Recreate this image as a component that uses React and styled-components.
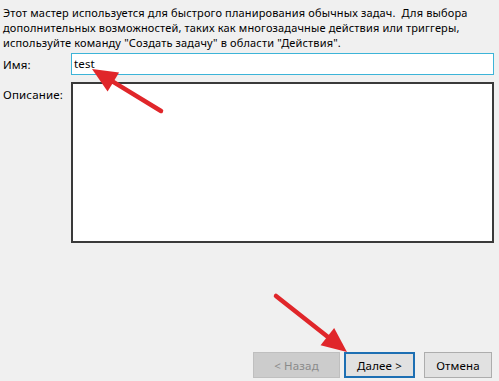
import styled, { createGlobalStyle } from "styled-components";

const Global = createGlobalStyle`
  html, body {
    margin: 0;
    padding: 0;
    background: #f0f0f0;
  }
  body {
    font-family: "Noto Sans", "Open Sans", sans-serif;
    font-size: 11px;
    letter-spacing: 0.15px;
    color: #000;
  }
`;

const Page = styled("div")`
  position: relative;
  width: 499px;
  height: 381px;
  overflow: hidden;
  background: #f0f0f0;
  box-sizing: border-box;
  padding: 5px 0 0 3px;
  display: flex;
  flex-direction: column;
`;

const Intro = styled("p")`
  margin: 0;
  line-height: 15px;
  font-size: 11px;
  white-space: nowrap;
`;

const Form = styled("div")`
  display: grid;
  grid-template-columns: 68px 423px;
  row-gap: 7px;
  margin-top: 3px;
  line-height: 15px;
`;

const Label = styled("label")`
  padding-top: ${({ $top }) => $top}px;
  font-size: 11.5px;
`;

const NameInput = styled("div")`
  height: 22px;
  box-sizing: border-box;
  border: 1px solid #3cb4d8;
  background: #fff;
  padding: 2px 0 0 2px;
  font-size: 11.5px;
`;

const Description = styled("div")`
  width: 423px;
  height: 161px;
  box-sizing: border-box;
  border: 2px solid #3a3a3a;
  background: #fff;
`;

const Footer = styled("div")`
  margin-top: auto;
  display: flex;
  justify-content: flex-end;
  padding: 0 7px 3px 0;
`;

const Button = styled("div")`
  height: 26px;
  width: ${({ $w }) => $w}px;
  margin-left: ${({ $gap }) => $gap || 0}px;
  box-sizing: border-box;
  display: flex;
  align-items: center;
  justify-content: center;
  font-size: 11.5px;
  background: ${({ $disabled }) => ($disabled ? "#cccccc" : "#e1e1e1")};
  color: ${({ $disabled }) => ($disabled ? "#8a8a8a" : "#000")};
  border: ${({ $primary, $disabled }) =>
    $primary ? "2px solid #1d6fb3" : $disabled ? "1px solid #bfbfbf" : "1px solid #adadad"};
`;

const Arrows = styled("svg")`
  position: absolute;
  left: 0;
  top: 0;
  pointer-events: none;
`;

const Arrow = ({ x1, y1, x2, y2 }) => {
  const dx = x2 - x1;
  const dy = y2 - y1;
  const len = Math.hypot(dx, dy);
  const ux = dx / len;
  const uy = dy / len;
  const hl = 25;
  const hw = 11;
  const bx = x2 - ux * hl;
  const by = y2 - uy * hl;
  const head = `${x2},${y2} ${bx - uy * hw},${by + ux * hw} ${bx + uy * hw},${by - ux * hw}`;
  return (
    <g>
      <line x1={x1} y1={y1} x2={bx + ux * 4} y2={by + uy * 4} stroke="#e0262a" strokeWidth="4.5" strokeLinecap="round" />
      <polygon points={head} fill="#e0262a" />
    </g>
  );
};

export default function App() {
  return (
    <>
      <Global />
      <Page>
        <Intro>
          Этот мастер используется для быстрого планирования обычных задач.&nbsp; Для выбора
          <br />
          дополнительных возможностей, таких как многозадачные действия или триггеры,
          <br />
          используйте команду "Создать задачу" в области "Действия".
        </Intro>
        <Form>
          <Label $top={4}>Имя:</Label>
          <NameInput>test</NameInput>
          <Label $top={5}>Описание:</Label>
          <Description />
        </Form>
        <Footer>
          <Button $w={87} $disabled>&lt; Назад</Button>
          <Button $w={71} $gap={4} $primary>Далее &gt;</Button>
          <Button $w={68} $gap={9}>Отмена</Button>
        </Footer>
        <Arrows width="499" height="381">
          <Arrow x1={161} y1={111} x2={92} y2={69} />
          <Arrow x1={276} y1={296} x2={347} y2={352} />
        </Arrows>
      </Page>
    </>
  );
}
